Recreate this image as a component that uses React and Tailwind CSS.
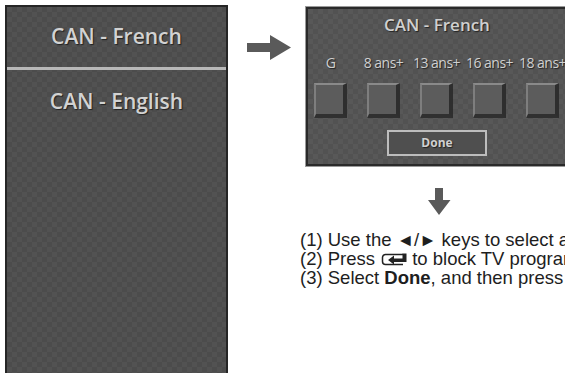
const tv = { fontFamily: '"Open Sans", "DejaVu Sans", sans-serif' }

const ratings = ['G', '8 ans+', '13 ans+', '16 ans+', '18 ans+']

function EnterKey() {
  return (
    <svg width="28" height="13" viewBox="0 0 28 13" className="inline-block align-[-1px] ml-[1px] mr-[3px]">
      <path d="M22 1.5 H4.5 A3 3 0 0 0 1.5 4.5 V8.5 A3 3 0 0 0 4.5 11.5 H22" fill="none" stroke="#222" strokeWidth="1.5" />
      <path d="M7 7 L13 2.5 V5.5 H21.5 V0.5 H25.5 V9 H13 V11.5 Z" fill="#222" />
    </svg>
  )
}

export default function App() {
  return (
    <div className="relative w-[565px] h-[373px] overflow-hidden bg-white flex items-start">
      {/* source menu */}
      <div
        style={tv}
        className="ml-[5px] mt-[5px] w-[223px] h-[380px] shrink-0 border-2 border-[#262626] bg-[#4f4f4f] bg-[image:repeating-conic-gradient(#4c4c4c_0%_25%,#525252_0%_50%)] bg-[length:10px_10px] text-[#d2d2d2] font-semibold [text-shadow:1px_1px_1px_#222]"
      >
        <div className="h-[60px] flex items-center justify-center text-[21px]">CAN - French</div>
        <div className="h-[3px] bg-[#b8b8b8]" />
        <div className="h-[64px] flex items-center justify-center text-[21px]">CAN - English</div>
      </div>

      {/* right arrow */}
      <svg width="45" height="26" viewBox="0 0 45 26" className="ml-[19px] mt-[35px] shrink-0">
        <path d="M0 8 H23 V0 L44 12.5 L23 25 V17 H0 Z" fill="#5a5a5a" />
      </svg>

      <div className="ml-[8px] mt-[7px] flex flex-col shrink-0">
        {/* block dialog */}
        <div
          style={tv}
          className="ml-[6px] w-[262px] h-[159px] border-2 border-[#2a2a2a] shadow-[0_0_0_1px_#9a9a9a] bg-[#555555] bg-[image:repeating-conic-gradient(#525252_0%_25%,#585858_0%_50%)] bg-[length:10px_10px] text-[#d0d0d0] [text-shadow:1px_1px_1px_#222] flex flex-col"
        >
          <div className="h-[32px] flex items-center justify-center text-[17px] font-semibold">CAN - French</div>
          <div className="ml-[6px] flex gap-[20px]">
            {ratings.map((r) => (
              <div key={r} className="w-[33px] flex flex-col items-center">
                <div className="h-[42px] flex items-center whitespace-nowrap text-[14px] tracking-[-0.5px]">{r}</div>
                <div className="w-[33px] h-[35px] border-t-2 border-l-2 border-r-4 border-b-4 border-t-[#8a8a8a] border-l-[#7e7e7e] border-r-[#2e2e2e] border-b-[#303030] bg-[#5c5c5c]" />
              </div>
            ))}
          </div>
          <div className="mt-[12px] mx-auto w-[100px] h-[26px] border-2 border-[#bdbdbd] bg-[#4f4f4f] flex items-center justify-center text-[12px] font-bold">
            Done
          </div>
        </div>

        {/* down arrow */}
        <svg width="23" height="27" viewBox="0 0 23 27" className="ml-[128px] mt-[22px]">
          <path d="M7 0 H15 V12 H22.5 L11 27 L0 12 H7 Z" fill="#5a5a5a" />
        </svg>

        <div className="mt-[15px] whitespace-nowrap text-[18.5px] leading-[19px] text-[#1e1e1e]" style={{ fontFamily: '"Liberation Sans", Arial, sans-serif' }}>
          <div className="h-[19px]">
            (1) Use the <span className="text-[17.5px] leading-none">◄</span>/<span className="text-[17.5px] leading-none">►</span> keys to select a rating.
          </div>
          <div>
            (2) Press <EnterKey />to block TV programs.
          </div>
          <div>
            (3) Select <b>Done</b>, and then press <EnterKey />.
          </div>
        </div>
      </div>
    </div>
  )
}
